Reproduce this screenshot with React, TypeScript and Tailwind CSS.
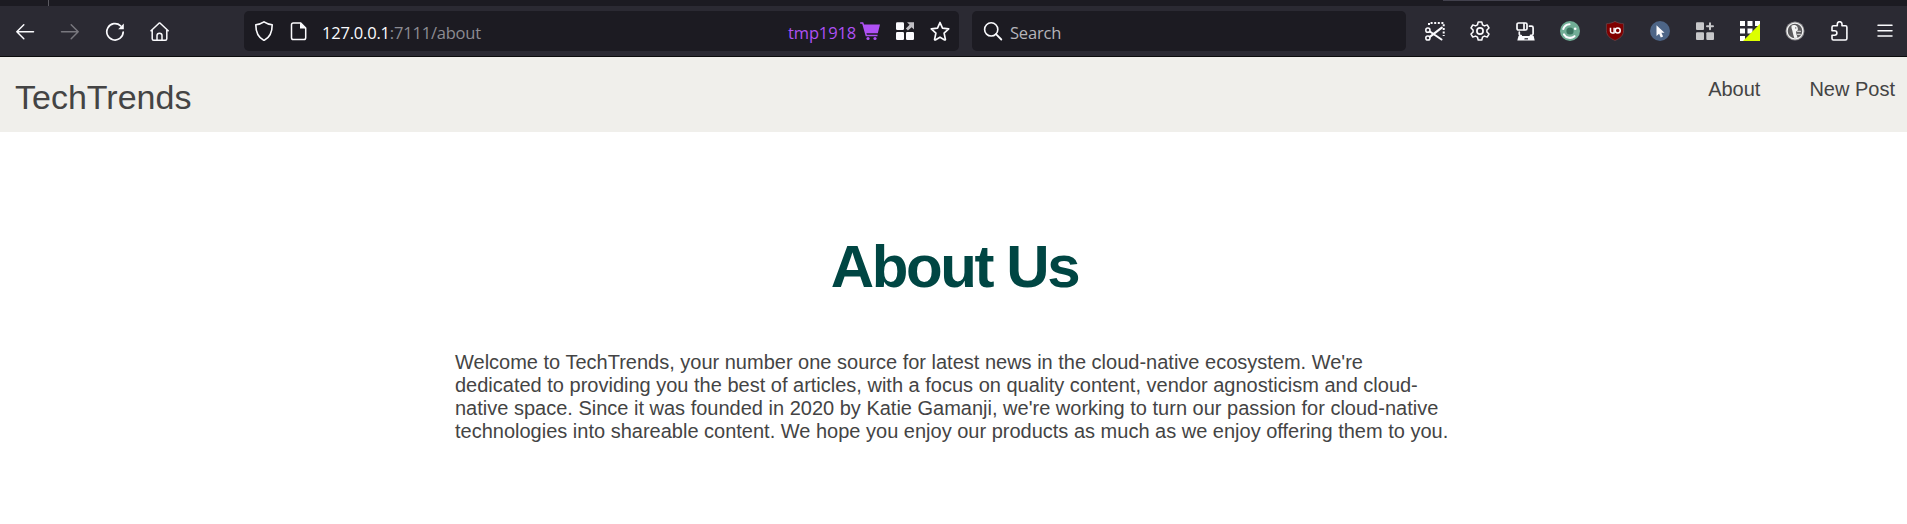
import React from "react";

type IconProps = { children: React.ReactNode; className?: string };

function Icon({ children, className = "" }: IconProps) {
  return (
    <svg
      viewBox="0 0 20 20"
      fill="none"
      stroke="currentColor"
      strokeWidth="1.5"
      strokeLinecap="round"
      strokeLinejoin="round"
      className={`h-5 w-5 shrink-0 ${className}`}
    >
      {children}
    </svg>
  );
}

function Slot({ children }: { children: React.ReactNode }) {
  return <button className="flex h-10 w-[45px] shrink-0 items-center justify-center">{children}</button>;
}

function NavButtons() {
  return (
    <div className="flex w-[242px] shrink-0">
      <Slot>
        <Icon><path d="M18.5 10.7H1.8M8.8 3.7l-7 7 7 7" /></Icon>
      </Slot>
      <Slot>
        <Icon className="text-[#78777e]"><path d="M1.5 10.7h16.7M11.2 3.7l7 7-7 7" /></Icon>
      </Slot>
      <Slot>
        <Icon>
          <path d="M15.6 4.8A8.2 8.2 0 1 0 18.2 11" strokeWidth="1.7" />
          <path d="M18.8 2.6v5.6h-5.6z" fill="currentColor" stroke="none" />
        </Icon>
      </Slot>
      <Slot>
        <Icon>
          <path d="M1 9.8l8-7.6q.6-.5 1.2 0l8 7.6M2.2 9v8.7q0 1.5 1.5 1.5h11.6q1.5 0 1.5-1.5V9M7 19v-4.5q0-2.3 2.5-2.3t2.5 2.3V19" />
        </Icon>
      </Slot>
    </div>
  );
}

function AddressBar() {
  return (
    <div className="flex h-10 w-[715px] shrink-0 items-center rounded-[5px] bg-[#1c1b22] pl-2.5 pr-[9px]">
      <Icon><path d="M10 .8c2.5 1.7 5.3 2.6 8.2 3 0 7-1.8 12.7-8.2 15.6C3.6 16.5 1.8 10.8 1.8 3.8 4.7 3.4 7.5 2.5 10 .8z" strokeWidth="1.6" /></Icon>
      <Icon className="ml-[15px]">
        <path d="M4.3 1.9h7.2l5.2 5.2v9.6q0 1.8-1.8 1.8H4.3q-1.800 0-1.800-1.800v-13q0-1.800 1.800-1.800z" />
        <path d="M11 1.5v6h6z" fill="currentColor" stroke="none" />
      </Icon>
      <span className="ml-[13px] pt-[3px] text-[16.5px] leading-5 tracking-[-0.2px] text-[#fbfbfe]">
        127.0.0.1<span className="text-[#8c8b92]">:7111/about</span>
      </span>
      <div className="ml-auto flex items-center">
        <span className="pt-[3px] text-[16.5px] leading-5 tracking-[-0.15px] text-[#af51f5]">tmp1918</span>
        <Icon className="ml-1 text-[#af51f5]">
          <path d="M.2 1.2h3l.9 2.300H20l-2.200 8.700H6.400l.5 1.600h10.600v1.400H5.700L2.200 2.700h-2z" fill="currentColor" stroke="none" />
          <circle cx="8" cy="17.5" r="1.600" fill="currentColor" stroke="none" />
          <circle cx="15" cy="17.5" r="1.600" fill="currentColor" stroke="none" />
        </Icon>
        <Icon className="ml-[15px]">
          <g fill="currentColor" stroke="none">
            <rect x="1" y="1.200" width="8" height="7.800" rx="1.200" />
            <rect x="1" y="11" width="8" height="8" rx="1.200" />
            <rect x="11" y="11" width="8" height="8" rx="1.200" />
            <path d="M12 1.200h7v7.300l-2.300-2.300-3.800 3.300-2-2 3.700-3.700z" fill="#c0bfc4" />
          </g>
        </Icon>
        <Icon className="ml-[15px]">
          <path d="M10 1.500l2.500 5.700 6.200.7-4.600 4.200 1.300 6.200q.1.900-.7.600L10 16.200l-4.700 2.700q-.8.300-.7-.6l1.300-6.200L1.300 7.900l6.200-.7z" strokeWidth="1.700" />
        </Icon>
      </div>
    </div>
  );
}

function SearchBar() {
  return (
    <div className="ml-[13px] flex h-10 w-[434px] shrink-0 items-center rounded-[5px] bg-[#1c1b22] pl-[11px]">
      <Icon>
        <circle cx="8.200" cy="8.400" r="6.600" strokeWidth="1.600" />
        <path d="M13 13.200l5.300 5.300" strokeWidth="1.800" />
      </Icon>
      <span className="ml-[7px] pt-[3px] text-[16.5px] leading-5 tracking-[-0.2px] text-[#b5b4ba]">Search</span>
    </div>
  );
}

function Extensions() {
  return (
    <div className="ml-[6px] flex shrink-0">
      <Slot>
        <Icon>
          <path d="M4 4V2h14.700v13" strokeWidth="2" strokeDasharray="2 1.600" strokeLinecap="butt" />
          <circle cx="2.900" cy="9.200" r="2.100" />
          <circle cx="2.900" cy="17" r="2.100" />
          <path d="M4.800 10.500l11.700 8M4.800 15.800l12-9.200" strokeWidth="2.100" />
        </Icon>
      </Slot>
      <Slot>
        <Icon>
          <circle cx="10" cy="10" r="3.100" strokeWidth="1.700" />
          <path d="M8.200 1h3.600l.7 2.800 2 1.100 2.700-1 1.800 3.100-2.100 2v2l2.100 2-1.800 3.100-2.700-1-2 1.100-.7 2.800H8.200l-.7-2.800-2-1.100-2.700 1L1 13l2.100-2V9L1 7l1.800-3.100 2.700 1 2-1.100z" />
        </Icon>
      </Slot>
      <Slot>
        <Icon>
          <rect x="2" y="2" width="10" height="7" rx="1.500" strokeWidth="1.700" />
          <path d="M9 2.500v6M4.300 11v2.200q0 1.300 1.300 1.300h.6M14.500 5.200h2q1.600 0 1.600 1.600v6q0 1.600-1.600 1.600h-1" strokeWidth="1.700" />
          <path d="M3.500 15h15.200l1 4.500H2.300z" fill="currentColor" stroke="none" />
          <path d="M9.500 17.800h3.500" stroke="#2b2a33" strokeWidth="1.200" strokeLinecap="butt" />
        </Icon>
      </Slot>
      <Slot>
        <Icon>
          <circle cx="10" cy="10" r="10" fill="#71ad96" stroke="none" />
          <circle cx="10" cy="10" r="3.600" fill="#39735f" stroke="none" />
          <path d="M9.500 3.200A6.900 6.900 0 0 0 3.300 8M4 13.400A6.900 6.900 0 0 0 14.500 15.200" strokeWidth="2.100" />
          <circle cx="15.200" cy="7.700" r="1.300" fill="currentColor" stroke="none" />
        </Icon>
      </Slot>
      <Slot>
        <Icon>
          <path d="M10 .5c2.800 1.500 5.500 2 8.600 2.300v6.400c0 5.500-3.500 8-8.600 10.300-5.100-2.300-8.600-4.800-8.600-10.300V2.800C4.500 2.500 7.200 2 10 .5z" fill="#800000" stroke="#67444a" strokeWidth=".8" />
          <path d="M5.500 6.700v3.600q0 1.700 1.700 1.700h1.900V6.700" strokeWidth="1.500" strokeLinecap="butt" />
          <circle cx="12.700" cy="9.400" r="2.500" strokeWidth="1.500" />
        </Icon>
      </Slot>
      <Slot>
        <Icon>
          <circle cx="10" cy="10" r="10" fill="#4d6587" stroke="none" />
          <path d="M6.500 4.300v10.800l2.600-2.300 1.700 3.600 2.300-1-1.700-3.600h3.100z" fill="currentColor" stroke="none" />
        </Icon>
      </Slot>
      <Slot>
        <Icon className="text-[#c7c7ca]">
          <g fill="currentColor" stroke="none">
            <rect x="1" y="1.300" width="8" height="7.700" rx="1" />
            <rect x="1" y="11.300" width="8" height="7.700" rx="1" />
            <rect x="11.300" y="11.300" width="7.700" height="7.700" rx="1" />
          </g>
          <path d="M15 2.300v6M12 5.300h6" strokeWidth="2" />
        </Icon>
      </Slot>
      <Slot>
        <Icon>
          <g fill="#fff" stroke="none">
            <path d="M0 0h5v5H0zM7.500 0h5v5h-5zM15 0h5v5h-5zM0 7.500h5v5H0zM7.500 7.500h5v5h-5zM0 15h5v5H0z" />
            <path d="M20 2.700V20H3z" fill="#dcff00" />
          </g>
        </Icon>
      </Slot>
      <Slot>
        <Icon>
          <circle cx="10" cy="10" r="9.500" fill="#8d8c90" stroke="none" />
          <circle cx="10" cy="10" r="7.900" fill="#5b5a5d" stroke="#f4f4f4" strokeWidth="1.300" />
          <path d="M6.500 4.800c1.300-1.300 4.300-1.100 5.500.5.900 1.200 1 2.700.8 4l-1.800 1.400.4 2.300 1.200 3.800-3.300.3C7.900 13.500 7.700 9.500 6.500 7z" fill="#f4f4f4" stroke="none" />
          <path d="M12.500 10.300h3M12.500 13.300h2.800" stroke="#c9c9c9" strokeWidth="1.300" />
          <circle cx="10.700" cy="6.900" r=".7" fill="#555" stroke="none" />
        </Icon>
      </Slot>
      <Slot>
        <Icon>
          <path d="M3.500 4.800h3.800V3q0-2.300 2.300-2.300T12 3v1.800h3.500q1.400 0 1.400 1.400v11.300q0 1.500-1.500 1.500H3.400q-1.400 0-1.400-1.500v-3.300h2.500q2.400 0 2.400-2.200T4.500 9.800H2V6.300q0-1.500 1.500-1.500z" strokeWidth="1.600" />
        </Icon>
      </Slot>
      <Slot>
        <Icon><path d="M3 4.300h14M3 9.700h14M3 15h14" /></Icon>
      </Slot>
    </div>
  );
}

export default function App() {
  return (
    <div className="h-[524px] w-[1907px] overflow-hidden bg-white font-['Liberation_Sans',Arial,sans-serif] text-[#444]">
      <div className="flex h-[57px] flex-col border-b border-[#0c0c0d] bg-[#2b2a33] font-['Open_Sans','Noto_Sans',sans-serif] text-[#fbfbfe]">
        <div className="flex h-1.5 shrink-0 bg-[#1c1b22]">
          <div className="ml-12 h-1.5 w-px bg-[#5b5a61]" />
          <div className="ml-[1394px] h-px w-[97px] bg-[#42414d]" />
        </div>
        <div className="flex h-[50px] items-center pl-[2px]">
          <NavButtons />
          <AddressBar />
          <SearchBar />
          <Extensions />
        </div>
      </div>

      <header className="flex h-[75px] justify-between bg-[#f0efeb] pl-[15px] pr-3">
        <a className="pt-[21px] text-[34px] leading-[39px]">TechTrends</a>
        <nav className="flex gap-[49px] pt-[21px] text-xl leading-[23px]">
          <a>About</a>
          <a>New Post</a>
        </nav>
      </header>

      <main className="flex flex-col items-center">
        <h1 className="mt-[100px] pl-0.5 text-[60px] font-bold leading-[69px] tracking-[-2.4px] text-[#004643]">About Us</h1>
        <p className="mt-[50px] w-[997px] text-xl leading-[23px]">
          Welcome to TechTrends, your number one source for latest news in the cloud-native ecosystem. We're
          dedicated to providing you the best of articles, with a focus on quality content, vendor agnosticism and
          cloud-native space. Since it was founded in 2020 by Katie Gamanji, we're working to turn our passion for
          cloud-native technologies into shareable content. We hope you enjoy our products as much as we enjoy
          offering them to you.
        </p>
      </main>
    </div>
  );
}
